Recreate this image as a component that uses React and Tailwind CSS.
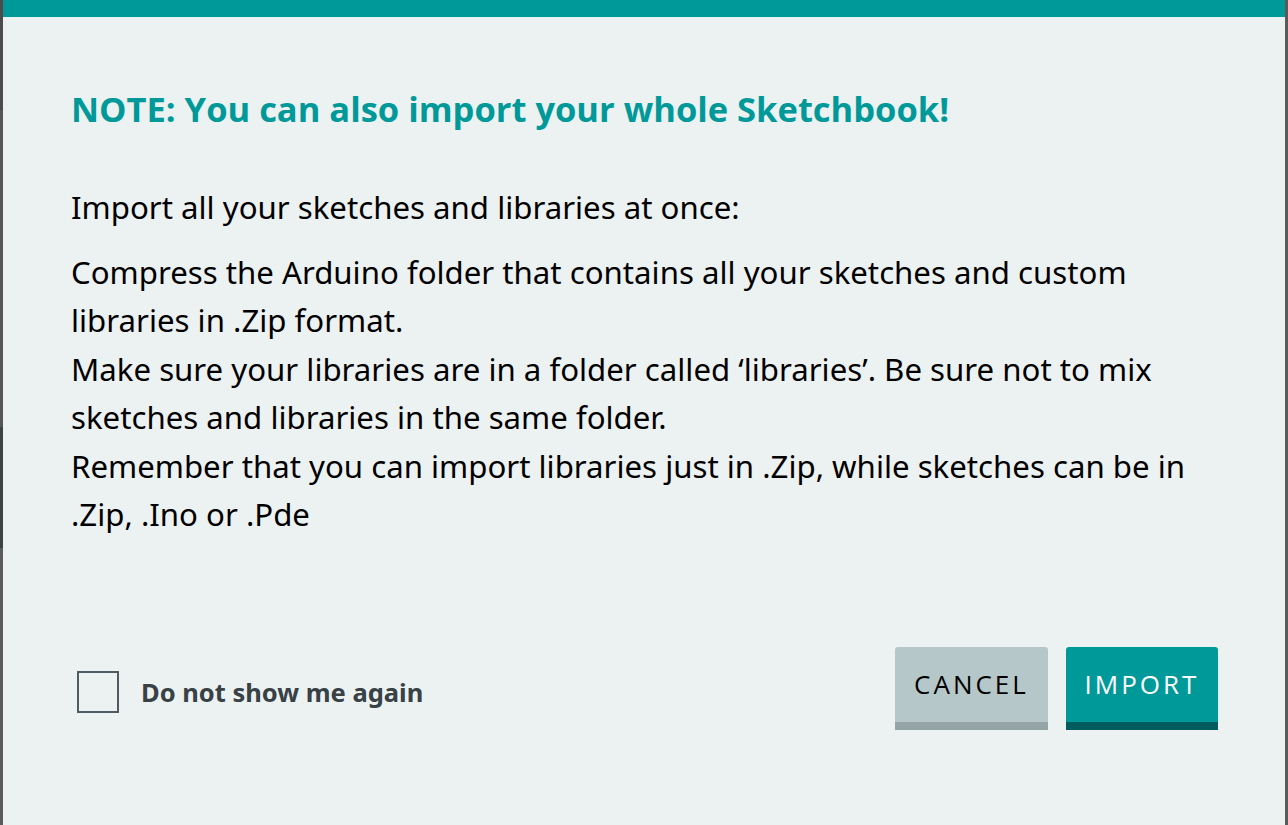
export default function App() {
  return (
    <div className="flex h-[825px] w-full overflow-hidden bg-[#ecf1f1]">
      {/* backdrop showing at the edges */}
      <div className="flex w-[3px] shrink-0 flex-col">
        <div className="h-[110px] bg-[#4b4b4b]" />
        <div className="h-[317px] bg-[#565656]" />
        <div className="h-[121px] bg-[#3d4242]" />
        <div className="flex-1 bg-[#5a5a5a]" />
      </div>

      <div className="flex flex-1 flex-col">
        <div className="h-[17px] bg-[#009999]" />

        <div className="flex flex-1 flex-col pl-[68px] pr-[67px] font-['Open_Sans',sans-serif]">
          <h2 className="mt-[72px] text-[34.5px] font-bold leading-[40px] text-[#009999]">
            NOTE: You can also import your whole Sketchbook!
          </h2>

          <div className="mt-[54px] font-['Noto_Sans',sans-serif] text-[31.2px] leading-[48.5px] text-black">
            <p>Import all your sketches and libraries at once:</p>
            <p className="mt-[16px]">
              Compress the Arduino folder that contains all your sketches and custom
              <br />
              libraries in .Zip format.
              <br />
              Make sure your libraries are in a folder called ‘libraries’. Be sure not to mix
              <br />
              sketches and libraries in the same folder.
              <br />
              Remember that you can import libraries just in .Zip, while sketches can be in
              <br />
              .Zip, .Ino or .Pde
            </p>
          </div>

          <div className="mt-[108px] flex items-center justify-between">
            <label className="mt-[8px] flex items-center gap-[22px]">
              <span className="ml-[6px] h-[42px] w-[42px] border-2 border-[#4e5b61]" />
              <span className="font-['Noto_Sans',sans-serif] text-[25.5px] font-bold text-[#374146]">
                Do not show me again
              </span>
            </label>

            <div className="flex gap-[18px]">
              <button className="h-[83px] w-[153px] rounded-t-[3px] border-b-[8px] border-[#95a5a5] bg-[#b5c7c9] text-[26px] tracking-[3px] text-black">
                CANCEL
              </button>
              <button className="h-[83px] w-[152px] rounded-t-[3px] border-b-[8px] border-[#005c5f] bg-[#009999] text-[26px] tracking-[3px] text-white">
                IMPORT
              </button>
            </div>
          </div>
        </div>
      </div>

      <div className="w-[3px] shrink-0 bg-[#5a5a5a]" />
    </div>
  );
}
